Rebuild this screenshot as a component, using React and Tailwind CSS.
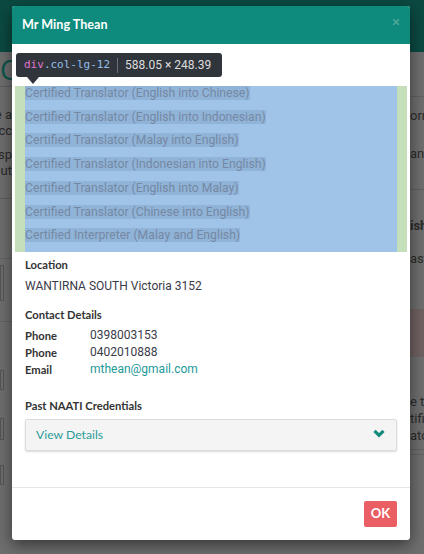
import React from "react";

const credentials = [
    "Certified Translator (English into Chinese)",
    "Certified Translator (English into Indonesian)",
    "Certified Translator (Malay into English)",
    "Certified Translator (Indonesian into English)",
    "Certified Translator (English into Malay)",
    "Certified Translator (Chinese into English)",
    "Certified Interpreter (Malay and English)",
];

const label = "font-['Lato',sans-serif] font-bold text-[11.2px] text-[#333]";
const value = "font-['Roboto',sans-serif] text-[12px] text-[#3a3a48]";

const App = () => {
    return (
        <div className="relative w-[424px] h-[554px] overflow-hidden bg-[#6e6e6e] font-['Roboto',sans-serif]">
            {/* Dimmed page behind the modal */}
            <div className="h-[52px] bg-[#0b4a41]" />
            <div className="flex justify-between">
                {/* left strip */}
                <div className="w-[12px] overflow-hidden flex flex-col items-end text-[13px] text-[#2a2a2a]">
                    <div className="h-[34px] w-full flex items-center text-[#0d5449] text-[28px] leading-none -ml-[8px]">
                        <span className="font-['Open_Sans',sans-serif]">O</span>
                    </div>
                    <div className="h-[1px] w-full bg-[#5f5f5f]" />
                    <div className="w-full pt-[20px] leading-[16px] whitespace-nowrap flex flex-col items-end">
                        <span>e a</span>
                        <span>cc</span>
                        <span className="mt-[8px]">sp</span>
                        <span>ut</span>
                    </div>
                    <div className="h-[1px] w-full bg-[#5f5f5f] mt-[19px]" />
                    <div className="h-[1px] w-full bg-[#626262] mt-[59px]" />
                    <div className="w-[4px] h-[36px] border border-[#555] mt-[6px] self-start" />
                    <div className="h-[1px] w-full bg-[#626262] mt-[20px]" />
                    <div className="w-[4px] h-[20px] border border-[#555] mt-[48px] self-start" />
                    <div className="w-[4px] h-[22px] border border-[#555] mt-[28px] self-start" />
                    <div className="w-[4px] h-[20px] border border-[#555] mt-[25px] self-start" />
                </div>
                {/* right strip */}
                <div className="w-[14px] overflow-hidden flex flex-col text-[13px] text-[#2a2a2a] whitespace-nowrap">
                    <div className="h-[45px] border-b border-[#606060]" />
                    <div className="pt-[11px] leading-[16px]">orn</div>
                    <div className="pt-[22px] leading-[16px]">ans</div>
                    <div className="h-[28px] border-b border-[#606060]" />
                    <div className="pt-[28px] leading-[16px] font-bold">ish</div>
                    <div className="pt-[17px] leading-[16px]">ast</div>
                    <div className="mt-[42px] h-[48px] bg-[#6f6161]" />
                    <div className="pt-[36px] leading-[17px]">
                        <div>e to</div>
                        <div>tifie</div>
                        <div>ato</div>
                    </div>
                    <div className="h-[6px] border-b border-[#606060]" />
                    <div className="h-[5px] border-b border-[#606060]" />
                </div>
            </div>

            {/* Modal */}
            <div className="absolute left-[12px] top-[6px] w-[398px] h-[534px] bg-white rounded-[3px] shadow-[0_5px_15px_rgba(0,0,0,0.5)] flex flex-col overflow-hidden">
                <div className="h-[38px] bg-[#0e8b7c] px-[10px] flex items-center justify-between shrink-0">
                    <span className="font-['Lato',sans-serif] font-bold text-[12.6px] text-white">
                        Mr Ming Thean
                    </span>
                    <span className="text-[#4ea99c] text-[15px] leading-none -mt-[5px]">×</span>
                </div>

                <div className="relative flex-1 px-[3px] pt-[42px]">
                    {/* devtools tooltip */}
                    <div className="absolute left-[4px] top-[9px] z-10">
                        <div className="h-[24px] w-[206px] bg-[#30343b] rounded-[3px] px-[8px] flex items-center">
                            <span className="font-['DejaVu_Sans_Mono',monospace] text-[11px] text-[#e074cf]">div</span>
                            <span className="font-['DejaVu_Sans_Mono',monospace] text-[11px] text-[#93bfea]">.col-lg-12</span>
                            <span className="w-[1px] h-[15px] bg-[#6b6e74] mx-[7px]" />
                            <span className="text-[12px] text-[#dedede]">588.05 × 248.39</span>
                        </div>
                        <div className="ml-[11px] w-0 h-0 border-x-[6px] border-x-transparent border-t-[7px] border-t-[#30343b]" />
                    </div>

                    <div className="bg-[#c4dfb9] px-[10px]">
                        <div className="bg-[#9fc4e7] h-[166px] flex flex-col">
                            {credentials.map((c) => (
                                <div key={c} className="h-[23.8px] flex items-start">
                                    <span className="block h-[14px] leading-[14px] bg-[#90b4d8] text-[12.2px] text-[#7688a3] whitespace-nowrap">
                                        {c}
                                    </span>
                                </div>
                            ))}
                        </div>
                    </div>

                    <div className="px-[10px]">
                        <div className={`${label} mt-[5px] leading-[16px]`}>Location</div>
                        <div className={`${value} mt-[5px] leading-[16px]`}>WANTIRNA SOUTH Victoria 3152</div>

                        <div className={`${label} mt-[13px] leading-[16px]`}>Contact Details</div>
                        <div className="mt-[4px] grid grid-cols-[65px_1fr] leading-[17px]">
                            <span className={label}>Phone</span>
                            <span className={value}>0398003153</span>
                            <span className={label}>Phone</span>
                            <span className={value}>0402010888</span>
                            <span className={label}>Email</span>
                            <span className="font-['Roboto',sans-serif] text-[12px] text-[#22999a]">mthean@gmail.com</span>
                        </div>

                        <div className={`${label} mt-[20px] leading-[16px]`}>Past NAATI Credentials</div>
                        <div className="mt-[5px] h-[32px] bg-[#f4f4f4] border border-[#dcdcdc] rounded-[2px] shadow-[0_1px_2px_rgba(0,0,0,0.15)] pl-[10px] pr-[10px] flex items-center justify-between">
                            <span className="font-['Lato',sans-serif] text-[12.2px] text-[#2a9c99]">View Details</span>
                            <svg width="12" height="9" viewBox="0 0 12 9" className="-mt-[3px] mr-[1px]">
                                <polyline points="1.5,1.8 6,6.3 10.5,1.8" fill="none" stroke="#138a7e" strokeWidth="3.2" />
                            </svg>
                        </div>
                    </div>
                </div>

                <div className="h-[53px] border-t border-[#e5e5e5] pt-[13px] pr-[13px] flex justify-end shrink-0">
                    <button className="h-[26px] w-[33px] bg-[#ea5f64] rounded-[2px] text-white font-['Lato',sans-serif] font-bold text-[13px] flex items-center justify-center">
                        OK
                    </button>
                </div>
            </div>
        </div>
    );
};

export default App;
